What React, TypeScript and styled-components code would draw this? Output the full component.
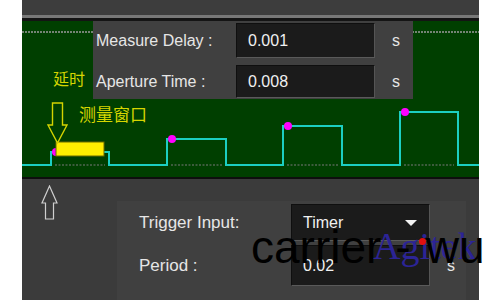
import React from "react";
import styled, { createGlobalStyle } from "styled-components";

const GlobalStyle = createGlobalStyle`
  html, body {
    margin: 0;
    padding: 0;
    background: #ffffff;
    overflow: hidden;
  }
  body {
    font-family: "Liberation Sans", Arial, sans-serif;
  }
`;

const Page = styled.div`
  position: relative;
  width: 500px;
  height: 300px;
  overflow: hidden;
  padding-left: 22px;
  box-sizing: border-box;
`;

const Screen = styled.div`
  width: 457px;
  height: 300px;
  display: flex;
  flex-direction: column;
  background: #3c3c3c;
`;

const TopStrip = styled.div`
  height: 15px;
  flex: 0 0 auto;
  background: #3d3d3d;
  border-bottom: 3px solid #787878;
  box-shadow: 0 3px 0 #141414;
  margin-bottom: 3px;
`;

const Scope = styled.div`
  position: relative;
  height: 156px;
  flex: 0 0 auto;
  background: #003f00;
  border-bottom: 2px solid #0e0e0e;
`;

const Wave = styled.svg`
  display: block;
  position: absolute;
  inset: 0;
`;

const MeasurePanel = styled.div`
  position: absolute;
  left: 71px;
  top: 0;
  width: 320px;
  height: 78px;
  background: #404040;
  box-sizing: border-box;
  padding: 2px 0 0 3px;
  display: grid;
  grid-template-columns: 140px 139px auto;
  grid-auto-rows: 35px;
  row-gap: 6px;
  align-items: center;
`;

const Label = styled.span<{ $size?: number }>`
  color: #e6e6e6;
  font-size: ${(p) => p.$size ?? 16}px;
  white-space: nowrap;
`;

const Field = styled.div<{ $h?: number }>`
  height: ${(p) => p.$h ?? 35}px;
  box-sizing: border-box;
  background: #1b1b1b;
  border: 1px solid;
  border-color: #0f0f0f #555555 #5a5a5a #0f0f0f;
  color: #f0f0f0;
  font-size: 16px;
  display: flex;
  align-items: center;
  justify-content: space-between;
  padding: 0 12px 0 11px;
`;

const Unit = styled.span`
  color: #e6e6e6;
  font-size: 16px;
  padding-left: 17px;
`;

const Note = styled.span<{ $x: number; $y: number; $size: number }>`
  position: absolute;
  left: ${(p) => p.$x}px;
  top: ${(p) => p.$y}px;
  font-family: "Noto Sans CJK SC", sans-serif;
  font-size: ${(p) => p.$size}px;
  line-height: 1;
  color: #d6d600;
  white-space: nowrap;
`;

const Bottom = styled.div`
  flex: 1 1 auto;
  display: flex;
  background: #3b3b3b;
`;

const ArrowCol = styled.div`
  flex: 0 0 95px;
  padding: 6px 0 0 19px;
  box-sizing: border-box;
`;

const TriggerPanel = styled.div`
  flex: 0 0 349px;
  margin-top: 22px;
  background: #404040;
  box-sizing: border-box;
  padding: 3px 0 0 22px;
  display: grid;
  grid-template-columns: 152px 139px auto;
  grid-template-rows: 37px 41px;
  row-gap: 4px;
  align-items: center;
`;

const Caret = styled.span`
  width: 0;
  height: 0;
  border-left: 6px solid transparent;
  border-right: 6px solid transparent;
  border-top: 6px solid #f2f2f2;
`;

const Watermark = styled.span`
  position: absolute;
  left: 251px;
  top: 224px;
  font-family: "Liberation Sans", Arial, sans-serif;
  font-size: 46px;
  line-height: 1;
  color: #000000;
  white-space: pre;
  z-index: 2;
`;

const Dash = styled.span`
  display: inline-block;
  margin: 0 15px 0 14px;
`;

const Brand = styled.span`
  position: absolute;
  left: 373px;
  top: 227px;
  font-family: "Liberation Serif", "Times New Roman", serif;
  font-size: 38px;
  line-height: 1;
  color: #2c2496;
  z-index: 1;
`;

const BrandDot = styled.span`
  position: absolute;
  left: 419px;
  top: 238px;
  width: 7px;
  height: 7px;
  border-radius: 50%;
  background: #e01010;
  z-index: 1;
`;

const pulses = [
  { x1: 29, x2: 87, top: 131 },
  { x1: 145, x2: 204, top: 118 },
  { x1: 261, x2: 320, top: 105 },
  { x1: 378, x2: 436, top: 91 },
];
const base = 144;

function Waveform() {
  let d = `M0 ${base}`;
  pulses.forEach((p) => {
    d += ` L${p.x1} ${base} L${p.x1} ${p.top} L${p.x2} ${p.top} L${p.x2} ${base}`;
  });
  d += ` L457 ${base}`;
  return (
    <Wave width="457" height="156" viewBox="0 0 457 156">
      <line x1="0" y1="11" x2="457" y2="11" stroke="#9a9a9a" strokeWidth="1.5" strokeDasharray="2 1" />
      {pulses.map((p, i) => (
        <line key={i} x1={p.x1 + 4} y1={base} x2={p.x2 - 4} y2={base} stroke="#7a7a7a" strokeWidth="1.2" strokeDasharray="2 1.5" />
      ))}
      <path d={d} fill="none" stroke="#1ccfc2" strokeWidth="2" />
      {pulses.map((p, i) => (
        <circle key={i} cx={p.x1 + 5} cy={p.top} r="4" fill="#ff00ff" />
      ))}
      <rect x="34" y="121" width="48" height="14" fill="#ffee00" stroke="#6b6b00" strokeWidth="1" />
      <polygon points="30.5,82 40.5,82 40.5,104 45,104 35.5,122 26,104 30.5,104" fill="none" stroke="#d4d400" strokeWidth="1.4" />
    </Wave>
  );
}

function UpArrow() {
  return (
    <svg width="18" height="36" viewBox="0 0 18 36">
      <polygon points="8.5,1 16,18 12.5,18 12.5,34 4.5,34 4.5,18 1,18" fill="none" stroke="#cfcfcf" strokeWidth="1.2" />
    </svg>
  );
}

export default function App() {
  return (
    <Page>
      <GlobalStyle />
      <Screen>
        <TopStrip />
        <Scope>
          <Waveform />
          <Note $x={31} $y={49} $size={16}>延时</Note>
          <Note $x={57} $y={84} $size={17}>测量窗口</Note>
          <MeasurePanel>
            <Label>Measure Delay :</Label>
            <Field>0.001</Field>
            <Unit>s</Unit>
            <Label>Aperture Time :</Label>
            <Field $h={33}>0.008</Field>
            <Unit>s</Unit>
          </MeasurePanel>
        </Scope>
        <Bottom>
          <ArrowCol>
            <UpArrow />
          </ArrowCol>
          <TriggerPanel>
            <Label $size={17}>Trigger Input:</Label>
            <Field $h={37}>
              Timer
              <Caret />
            </Field>
            <span />
            <Label $size={17}>Period :</Label>
            <Field $h={41}>0.02</Field>
            <Unit>s</Unit>
          </TriggerPanel>
        </Bottom>
      </Screen>
      <Brand>Agitek</Brand>
      <BrandDot />
      <Watermark>
        carrier<Dash>-</Dash>wu
      </Watermark>
    </Page>
  );
}
